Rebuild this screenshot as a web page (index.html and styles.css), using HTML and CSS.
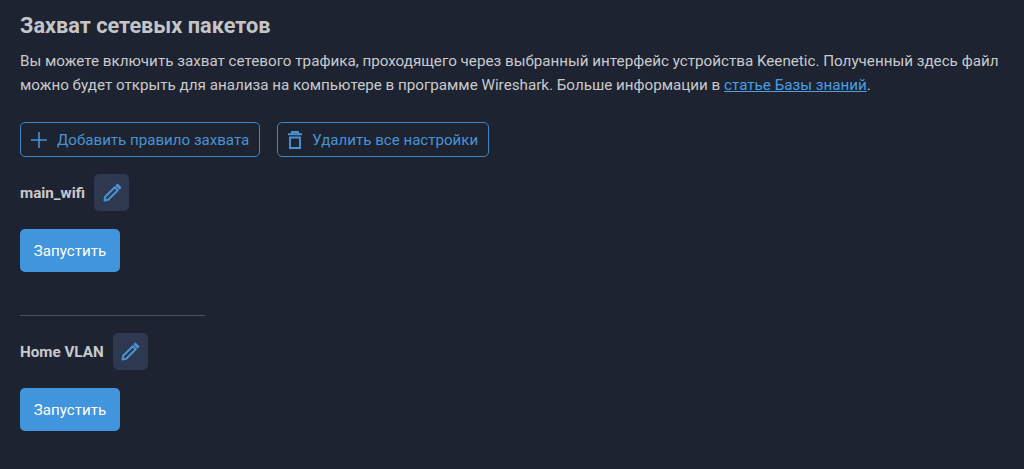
FILE: index.html
```html
<!DOCTYPE html>
<html lang="ru">
<head>
  <meta charset="UTF-8">
  <title>Захват сетевых пакетов</title>
  <link rel="stylesheet" href="styles.css">
</head>
<body>

  <h1 class="title">Захват сетевых пакетов</h1>
  <p class="intro">Вы можете включить захват сетевого трафика, проходящего через выбранный интерфейс устройства Keenetic. Полученный здесь файл можно будет открыть для анализа на компьютере в программе Wireshark. Больше информации в <a href="#">статье Базы знаний</a>.</p>

  <div class="actions">
    <button class="outline-btn add-btn">
      <svg width="20" height="20" viewBox="0 0 20 20"><path d="M8 2v16M0 10h16" fill="none" stroke="currentColor" stroke-width="1.6"/></svg>
      Добавить правило захвата
    </button>
    <button class="outline-btn del-btn">
      <svg width="14" height="18" viewBox="0 0 14 18"><path d="M0 3.2h14M4 2.6V1h6v1.6M2 6.5h10V17H2z" fill="none" stroke="currentColor" stroke-width="1.9"/></svg>
      Удалить все настройки
    </button>
  </div>

  <div class="rule">
    <div class="rule-head">
      <span class="rule-name">main_wifi</span>
      <button class="edit-btn">
        <svg width="20" height="20" viewBox="0 0 20 20"><path d="M2.5 17.5l.7-3.7L12.8 4.2l3 3-9.6 9.6zM14.6 2.4l.8-.8 3 3-.8.8z" fill="none" stroke="currentColor" stroke-width="2" stroke-linejoin="round"/></svg>
      </button>
    </div>
    <button class="start-btn">Запустить</button>
  </div>

  <hr class="divider">

  <div class="rule">
    <div class="rule-head">
      <span class="rule-name">Home VLAN</span>
      <button class="edit-btn">
        <svg width="20" height="20" viewBox="0 0 20 20"><path d="M2.5 17.5l.7-3.7L12.8 4.2l3 3-9.6 9.6zM14.6 2.4l.8-.8 3 3-.8.8z" fill="none" stroke="currentColor" stroke-width="2" stroke-linejoin="round"/></svg>
      </button>
    </div>
    <button class="start-btn">Запустить</button>
  </div>

</body>
</html>
```

FILE: styles.css
```css
body { margin: 0; padding: 14px 20px 0; background: #1d2331; color: #c9cacd; font-family: Roboto, "Liberation Sans", sans-serif; overflow: hidden; }
.title { margin: 0; font-size: 21.7px; line-height: 24px; font-weight: 700; color: #c4c5c8; }
.intro { margin: 11px 0 0; font-size: 15.2px; line-height: 24px; }
.intro a { color: #4a9fe3; }
.actions { display: flex; gap: 17px; margin-top: 25px; }
button { font-family: inherit; cursor: pointer; }
.outline-btn { display: flex; align-items: center; gap: 6px; height: 35px; padding: 0 10px; background: none; border: 1px solid #3f86c4; border-radius: 5px; color: #4a93d2; font-size: 15.1px; }
.del-btn { gap: 10px; }
.rule-head { display: flex; align-items: center; gap: 9px; margin-top: 17px; }
.rule-name { font-size: 15.2px; font-weight: 700; color: #c9cacd; }
.edit-btn { display: flex; align-items: center; justify-content: center; width: 35px; height: 37px; padding: 0; background: #2e3850; border: none; border-radius: 5px; color: #4a93d2; }
.start-btn { display: block; width: 100px; height: 43px; margin-top: 18px; background: #4095dc; border: none; border-radius: 5px; color: #fff; font-size: 15.1px; }
.divider { width: 185px; height: 1px; margin: 43px 0 0; background: #4a4f5c; border: none; }
```
